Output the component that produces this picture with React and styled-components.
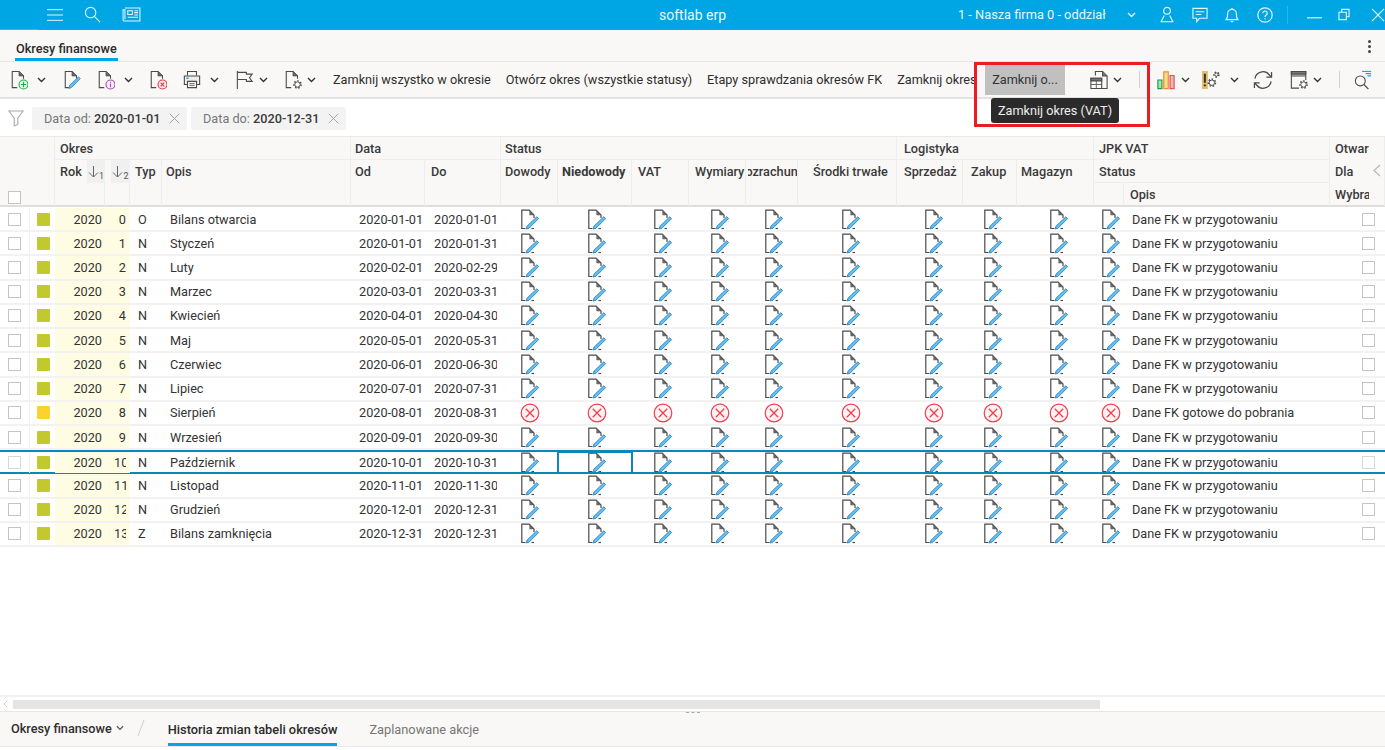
import React from 'react';
import styled, { createGlobalStyle } from 'styled-components';

const Global = createGlobalStyle`
  html, body { margin: 0; padding: 0; background: #fff; overflow: hidden; }
  * { box-sizing: border-box; }
  body { font-family: Roboto, "Noto Sans", sans-serif; font-size: 12.7px; color: #333; }
`;

const COLS = '30px 25px 50px 25px 32px 189px 74px 76px 57px 74px 57px 57px 52px 99px 66px 54px 77px 30px 206px 55px';

const Page = styled.div`position: relative; width: 1385px; height: 750px; display: flex; flex-direction: column; overflow: hidden;`;

const TopBar = styled.header`position: relative; height: 30px; flex: none; background: #00a5e3; color: #e9f8fe; display: flex; align-items: center; border-bottom: 1px solid #1d9fd4;
  &::after { content: ''; position: absolute; left: 0; bottom: -1px; width: 38px; height: 1px; background: #e8784f; }`;
const TopLeft = styled.div`display: flex; align-items: center; gap: 21px; padding-left: 47px; width: 659px;`;
const Brand = styled.div`width: 299px; font-size: 14px;`;
const Firm = styled.div`font-size: 12.8px; width: 169px;`;
const TopRight = styled.div`display: flex; align-items: center;`;
const TopSlot = styled.span`display: flex; margin-left: ${p => p.$ml}px;`;
const TopDivider = styled.span`width: 1px; height: 18px; background: #2fb5e8; margin-left: 14px;`;

const TabBar = styled.div`height: 32px; flex: none; background: #f9f8f6; border-bottom: 1px solid #e6e5e3; display: flex; align-items: flex-end; justify-content: space-between; padding: 0 14px 0 15px;`;
const MainTab = styled.div`height: 29px; padding: 9px 1px 0; font-weight: 500; font-size: 12.7px; color: #2b2b2b; border-bottom: 3px solid #00a5e3;`;
const Kebab = styled.div`align-self: center; display: flex; flex-direction: column; gap: 2px; margin-top: 1px;
  span { width: 3px; height: 3px; background: #444; border-radius: 50%; }`;

const Toolbar = styled.div`height: 37px; flex: none; background: #f9f8f6; border-bottom: 2px solid #e3e3e3; display: flex; align-items: center; padding-left: 10px;`;
const Tool = styled.div`display: flex; align-items: center; flex: none; gap: ${p => p.$gap ?? 9}px; margin-left: ${p => p.$ml ?? 16}px;`;
const ToolText = styled.div`flex: none; white-space: nowrap; overflow: hidden; font-size: 12.7px; color: #2e2e2e; margin-left: ${p => p.$ml ?? 15}px; ${p => p.$w ? `width:${p.$w}px;` : ''}`;
const HotButton = styled.div`flex: none; width: 80px; height: 30px; margin-left: 11px; background: #c0c0c0; color: #333; display: flex; align-items: center; padding-left: 7px; font-size: 12.7px;`;
const ToolSep = styled.span`flex: none; width: 1px; height: 17px; background: #cfcfcf; margin-left: ${p => p.$ml ?? 17}px;`;

const FilterBar = styled.div`height: 37px; flex: none; display: flex; align-items: center; padding: 1px 0 0 8px; background: #fff;`;
const Chip = styled.div`height: 23px; width: 155px; margin-left: ${p => p.$ml}px; background: #f3f3f3; border-radius: 2px; display: flex; align-items: center; padding-left: 12px; color: #777; font-size: 12.7px; white-space: pre;
  b { font-weight: 500; color: #3a3a3a; }
  svg { margin-left: 9px; }`;

const GridHead = styled.div`flex: none; height: 71px; display: grid; grid-template-columns: ${COLS}; grid-template-rows: 23px 23px 23px; background: #f9f8f6; border-top: 1px solid #e8e8e8; border-bottom: 2px solid #dedede; position: relative;`;
const HeadCell = styled.div`grid-column: ${p => p.$c}; grid-row: ${p => p.$r}; min-width: 0; overflow: hidden; white-space: nowrap; display: flex; align-items: ${p => p.$end ? 'flex-end' : p.$tall ? 'flex-start' : 'center'}; justify-content: flex-start; padding-left: ${p => p.$pl ?? 0}px; ${p => p.$end ? 'padding-bottom: 2px;' : ''} ${p => p.$tall ? 'padding-top: 4px;' : ''} font-size: 12.7px; font-weight: ${p => p.$bold ? 700 : 500}; color: #3a3a3a; box-shadow: inset -1px 0 0 #eeedeb${p => p.$under ? ', inset 0 -1px 0 #eeedeb' : ''};`;
const HeadLabel = styled.span`flex: none; ${p => p.$w ? `width:${p.$w}px; overflow:hidden;` : ''}`;
const ClippedLabel = styled.span`flex: none; width: 49px; margin-left: 2px; overflow: hidden; display: flex; justify-content: center;
  span { flex: none; }`;
const SortBox = styled.span`position: absolute; top: 23px; left: ${p => p.$x}px; width: ${p => p.$w}px; height: 23px; background: #f0f0f0; display: flex; align-items: center; justify-content: center; font-size: 9px; font-weight: 400; color: #555;`;
const SortIndex = styled.span`margin-top: 8px;`;
const CollapseArrow = styled.div`position: absolute; left: 1373px; top: 27px;`;

const Body = styled.div`flex: 1; min-height: 0; background: #fff; padding-top: 1px;`;
const Row = styled.div`position: relative; display: grid; grid-template-columns: ${COLS}; height: 24.23px; border-bottom: 2px solid ${p => p.$sel ? '#0b87b9' : '#f3f2f0'}; ${p => p.$sel ? 'border-top: 2px solid #0b87b9;' : ''} align-items: center;`;
const Cell = styled.div`height: 100%; min-width: 0; display: flex; align-items: center; white-space: nowrap; padding-left: ${p => p.$pl ?? 0}px; padding-right: ${p => p.$pr ?? 0}px; font-size: 12.7px; color: #333; background: ${p => p.$tint ? '#fefde3' : 'transparent'}; ${p => p.$line ? 'border-right: 1px solid #f2f1ef;' : ''} ${p => p.$center ? 'justify-content: center;' : ''} ${p => p.$active ? 'outline: 2px solid #0b87b9; outline-offset: -1px;' : ''}`;
const Clip = styled.div`flex: 1; min-width: 0; overflow: hidden; text-align: ${p => p.$right ? 'right' : 'left'};`;
const Check = styled.span`display: block; width: 13px; height: 13px; background: #fff; border: 1px solid ${p => p.$faint ? '#d8d8d8' : '#c4c4c4'};`;
const Square = styled.span`display: block; width: 13px; height: 13px; border-radius: 1px; background: ${p => p.$c};`;

const ScrollArea = styled.div`flex: none; height: 17px; border-top: 2px solid #f1f1f1; border-bottom: 1px solid #e6e6e6; display: flex; align-items: center; padding-left: 3px; gap: 5px; position: relative;`;
const ScrollThumb = styled.div`width: 1087px; height: 9px; background: #e4e4e4;`;
const Grip = styled.div`position: absolute; left: 686px; bottom: -2px; width: 14px; border-top: 1px dashed #aaa; z-index: 2;`;
const BottomBar = styled.div`flex: none; height: 35px; background: #f9f8f6; border-bottom: 1px solid #e8e8e8; display: flex; align-items: stretch; padding-left: 11px;`;
const Crumb = styled.div`display: flex; align-items: center; gap: 4px; font-weight: 500; font-size: 12.7px; color: #2f2f2f; padding-bottom: 2px;`;
const Slash = styled.div`width: 10px; margin: 0 21px 0 13px; display: flex; align-items: center; padding-bottom: 2px;`;
const BottomTab = styled.div`display: flex; align-items: center; margin-right: 32px; font-size: 12.8px; padding-top: 3px; font-weight: ${p => p.$on ? 500 : 400}; color: ${p => p.$on ? '#2b2b2b' : '#777'}; border-bottom: 3px solid ${p => p.$on ? '#00a5e3' : 'transparent'};`;
const Foot = styled.div`flex: none; height: 3px; background: #fff;`;

const RedFrame = styled.div`position: absolute; left: 974px; top: 62px; width: 176px; height: 65px; border: 3px solid #ed1c24; pointer-events: none;`;
const Tip = styled.div`position: absolute; left: 991px; top: 98px; width: 128px; height: 25px; background: #2b2b2b; border-radius: 3px; color: #eee; font-size: 12.7px; display: flex; align-items: center; justify-content: center;`;

const Chevron = ({ c = '#333', w = 9 }) => (
  <svg width={w} height="6" viewBox="0 0 9 6" fill="none"><path d="M1 1l3.500 3.500L8 1" stroke={c} strokeWidth="1.400" /></svg>
);

const Page1 = ({ c = '#4a4a4a' }) => (
  <>
    <path d="M8 19.500H2.500V1.500h7.500l5 5v3" fill="none" stroke={c} strokeWidth="1.200" />
    <path d="M10 1.500v5h5z" fill="#6a6a6a" stroke={c} strokeWidth=".8" />
  </>
);
const Pencil = () => (
  <path d="M17.200 7.500l2 2L9.400 19.400 6.400 20.200l.8-3z" fill="#6dbcec" stroke="#2a8fd0" strokeWidth="1" />
);
const DocEdit = () => (
  <svg width="20" height="21" viewBox="0 0 20 21">
    <path d="M5.500 19.500H1.800V1.200h7.400l4.800 4.800v3" fill="none" stroke="#4a4a4a" strokeWidth="1.200" />
    <path d="M9.400 1.400v4.800h4.600z" fill="#666" />
    <path d="M11.500 19.500h2.500" stroke="#4a4a4a" strokeWidth="1.200" />
    <path d="M16.800 7.800l1.800 1.800L9 19.200 6.200 20l.8-2.800z" fill="#6dbcec" stroke="#2a8fd0" strokeWidth="1" />
  </svg>
);
const DocCancel = () => (
  <svg width="20" height="20" viewBox="0 0 20 20" fill="none">
    <circle cx="10" cy="10" r="8.800" fill="#fff3f3" stroke="#ee3f4f" strokeWidth="1.200" />
    <path d="M5.800 5.800l8.400 8.400M14.200 5.800l-8.400 8.400" stroke="#ee3f4f" strokeWidth="1.300" />
  </svg>
);

const ICO = { width: 18, height: 20, viewBox: '0 0 20 22' };
const NewIcon = () => <svg {...ICO}><Page1 /><circle cx="15" cy="16" r="5" fill="#e3f7e6" stroke="#2aa84a" strokeWidth="1.200" /><path d="M15 13v6M12 16h6" stroke="#2aa84a" strokeWidth="1.200" /></svg>;
const EditIcon = () => <svg {...ICO}><Page1 /><Pencil /></svg>;
const InfoIcon = () => <svg {...ICO}><Page1 /><circle cx="15" cy="16" r="5" fill="#f6ecf8" stroke="#a349b5" strokeWidth="1.200" /><path d="M15 15v4M15 13v1" stroke="#a349b5" strokeWidth="1.200" /></svg>;
const DelIcon = () => <svg {...ICO}><Page1 /><circle cx="15" cy="16" r="5" fill="#fdeaea" stroke="#e5323f" strokeWidth="1.200" /><path d="M13 14l4 4M17 14l-4 4" stroke="#e5323f" strokeWidth="1.200" /></svg>;
const PrintIcon = () => (
  <svg {...ICO} fill="none" stroke="#4a4a4a" strokeWidth="1.200">
    <path d="M5 6V1.500h10V6" /><path d="M5 16H1.500V6.500h17V16H15" fill="#eee" />
    <path d="M5 12.500h10V19.500H5z" fill="#fff" /><path d="M7 15h6M7 17h6" strokeWidth=".9" /><path d="M3.500 9h3" stroke="#2a8fd0" />
  </svg>
);
const FlagIcon = () => (
  <svg {...ICO} fill="none" stroke="#4a4a4a" strokeWidth="1.200">
    <path d="M1.500 1v20" /><path d="M1.500 2.500h10v2H18l-3 4 3 4h-6.500v-2H1.500" />
  </svg>
);
const Gear = ({ x, y, r = 3 }) => (
  <g fill="#fff" stroke="#4a4a4a">
    <circle cx={x} cy={y} r={r + 1} strokeDasharray="1.700 1.900" strokeWidth="1.600" />
    <circle cx={x} cy={y} r={r} strokeWidth="1.100" />
  </g>
);
const DocGearIcon = () => <svg {...ICO}><Page1 /><Gear x={15} y={16} /></svg>;
const DocWinIcon = () => (
  <svg {...ICO} fill="none" stroke="#4a4a4a" strokeWidth="1.200">
    <path d="M6 6V1.500h8l5 5V20.500H13" /><path d="M14 1.500v5h5" fill="#777" />
    <path d="M1 9h12v11.500H1z" fill="#fff" /><path d="M1 9h12v3H1z" fill="#777" /><path d="M1 16h12M7 12v8.500" strokeWidth=".9" />
  </svg>
);
const ChartIcon = () => (
  <svg {...ICO}>
    <path d="M1 11h4.500v9.500H1z" fill="#a9e0b5" stroke="#1f9f45" strokeWidth="1.300" />
    <path d="M7.500 2h5v18.500h-5z" fill="#fbdc8e" stroke="#ee8b2d" strokeWidth="1.300" />
    <path d="M14.500 6h4.500v14.500h-4.500z" fill="#f7b3b9" stroke="#e5505c" strokeWidth="1.300" />
  </svg>
);
const AlertGearIcon = () => (
  <svg {...ICO}>
    <path d="M0 1h6.500v20H0z" fill="#e2bc6a" />
    <path d="M3.200 4v10M3.200 16v2" stroke="#333" strokeWidth="2.200" />
    <Gear x={16} y={5} r={1.800} />
    <Gear x={11} y={14} r={3} />
  </svg>
);
const RefreshIcon = () => (
  <svg width="20" height="20" viewBox="0 0 21 21" fill="none" stroke="#4a4a4a" strokeWidth="1.300">
    <path d="M2 9a8.500 8.500 0 0 1 15-4l2 2.200" /><path d="M19.500 2v5.500H14" />
    <path d="M19 12a8.500 8.500 0 0 1-15 4l-2-2.200" /><path d="M1.500 19v-5.500H7" />
  </svg>
);
const WinGearIcon = () => (
  <svg {...ICO} fill="none" stroke="#4a4a4a" strokeWidth="1.200">
    <path d="M10 20H1.500V1.500h16V11" /><path d="M1.500 1.500h16v3h-16z" fill="#777" /><path d="M1.500 6.500h16" />
    <Gear x={15} y={16} />
  </svg>
);
const SearchListIcon = () => (
  <svg {...ICO} fill="none" stroke="#4a4a4a" strokeWidth="1.200">
    <circle cx="7" cy="12" r="5.500" /><path d="M11 16l5 5" />
    <path d="M9 1.500h10" stroke="#2a9fe0" strokeWidth="1.300" /><path d="M13 4h6M15 6.500h4" stroke="#2a9fe0" strokeWidth="1.300" />
  </svg>
);
const W = '#e4f6fd';
const Burger = () => <svg width="16" height="14" viewBox="0 0 18 14" stroke={W} strokeWidth="1.100"><path d="M0 1h18M0 7h18M0 13h18" /></svg>;
const Mag = () => <svg width="17" height="17" viewBox="0 0 18 18" fill="none" stroke={W} strokeWidth="1.200"><circle cx="7" cy="7" r="5.500" /><path d="M11 11l6 6" /></svg>;
const News = () => <svg width="19" height="15" viewBox="0 0 20 16" fill="none" stroke={W} strokeWidth="1.100"><path d="M3 1h16v14H2.500A1.500 1.500 0 0 1 1 13.500V3h2v10" /><path d="M6 4h5v4H6zM13 4h4M13 6h4M13 8.500h4M6 11h11" /></svg>;
const UserI = () => <svg width="14" height="17" viewBox="0 0 15 18" fill="none" stroke={W} strokeWidth="1.200"><circle cx="7.500" cy="5" r="3.600" /><path d="M4.600 10L1.200 16.800h12.600L10.400 10" /></svg>;
const ChatI = () => <svg width="16" height="16" viewBox="0 0 17 17" fill="none" stroke={W} strokeWidth="1.200"><path d="M1 1.500h15v10.500H8L5 15.500V12H1z" /><path d="M4 5h9M4 8h6" /></svg>;
const BellI = () => <svg width="14" height="16" viewBox="0 0 15 17" fill="none" stroke={W} strokeWidth="1.200"><path d="M1.200 13.500c1.500-1.500 1.600-3 1.600-6.300a4.700 4.700 0 0 1 9.400 0c0 3.300.1 4.800 1.600 6.300z" /><path d="M6 15.700h3M7.500 1v1" /></svg>;
const HelpI = () => <svg width="16" height="16" viewBox="0 0 16 16" fill="none" stroke={W} strokeWidth="1.200"><circle cx="8" cy="8" r="7.200" /><path d="M5.800 6.200a2.200 2.200 0 1 1 3.400 1.900c-.8.500-1.200.9-1.200 1.900M8 11.200v1.300" /></svg>;
const MinI = () => <svg width="15" height="16" viewBox="0 0 16 16" stroke={W} strokeWidth="1.200"><path d="M0 11h16" /></svg>;
const ResI = () => <svg width="12" height="13" viewBox="0 0 13 13" fill="none" stroke={W} strokeWidth="1.200"><path d="M1 4h8v8H1z" /><path d="M4 4V1h8v8H9" /></svg>;
const CloseI = () => <svg width="14" height="14" viewBox="0 0 15 15" stroke={W} strokeWidth="1.200"><path d="M1 1l13 13M14 1L1 14" /></svg>;
const Funnel = () => <svg width="16" height="17" viewBox="0 0 16 17" fill="none" stroke="#a8a8a8" strokeWidth="1.100"><path d="M.8 1h14.400L9.800 8v6.500L6.200 16V8z" /></svg>;
const Cross = () => <svg width="11" height="11" viewBox="0 0 11 11" stroke="#a5a5a5" strokeWidth="1"><path d="M.8.8l9.400 9.400M10.200.8L.8 10.200" /></svg>;
const Sort = ({ n }) => (
  <>
    <svg width="11" height="13" viewBox="0 0 11 13" fill="none" stroke="#666" strokeWidth="1"><path d="M5.500 1v11M1 7.500l4.500 4.500L10 7.500" /></svg>
    <SortIndex>{n}</SortIndex>
  </>
);

const monthRows = [
  ['0', 'O', 'Bilans otwarcia', '2020-01-01', '2020-01-01'],
  ['1', 'N', 'Styczeń', '2020-01-01', '2020-01-31'],
  ['2', 'N', 'Luty', '2020-02-01', '2020-02-29'],
  ['3', 'N', 'Marzec', '2020-03-01', '2020-03-31'],
  ['4', 'N', 'Kwiecień', '2020-04-01', '2020-04-30'],
  ['5', 'N', 'Maj', '2020-05-01', '2020-05-31'],
  ['6', 'N', 'Czerwiec', '2020-06-01', '2020-06-30'],
  ['7', 'N', 'Lipiec', '2020-07-01', '2020-07-31'],
  ['8', 'N', 'Sierpień', '2020-08-01', '2020-08-31'],
  ['9', 'N', 'Wrzesień', '2020-09-01', '2020-09-30'],
  ['10', 'N', 'Październik', '2020-10-01', '2020-10-31'],
  ['11', 'N', 'Listopad', '2020-11-01', '2020-11-30'],
  ['12', 'N', 'Grudzień', '2020-12-01', '2020-12-31'],
  ['13', 'Z', 'Bilans zamknięcia', '2020-12-31', '2020-12-31'],
];
const statusShift = [0, 3, 5, 5, 4, 7, 7, 6, 6, 3];

const heads = [
  { t: 'Okres', c: '3 / 7', r: '1', pl: 5, under: 1 },
  { t: 'Data', c: '7 / 9', r: '1', pl: 4, under: 1 },
  { t: 'Status', c: '9 / 15', r: '1', pl: 4, under: 1 },
  { t: 'Logistyka', c: '15 / 18', r: '1', pl: 7, under: 1 },
  { t: 'JPK VAT', c: '18 / 20', r: '1', pl: 5, under: 1 },
  { t: 'Otwar', c: '20', r: '1', pl: 5, w: 34 },
  { t: 'Rok', c: '3', r: '2 / 4', pl: 5, tall: 1 },
  { t: '', c: '4', r: '2 / 4' },
  { t: 'Typ', c: '5', r: '2 / 4', pl: 5, tall: 1 },
  { t: 'Opis', c: '6', r: '2 / 4', pl: 4, tall: 1 },
  { t: 'Od', c: '7', r: '2 / 4', pl: 4, tall: 1 },
  { t: 'Do', c: '8', r: '2 / 4', pl: 6, tall: 1 },
  { t: 'Dowody', c: '9', r: '2 / 4', pl: 4, tall: 1 },
  { t: 'Niedowody', c: '10', r: '2 / 4', pl: 4, tall: 1, bold: 1 },
  { t: 'VAT', c: '11', r: '2 / 4', pl: 6, tall: 1 },
  { t: 'Wymiary', c: '12', r: '2 / 4', pl: 6, tall: 1, w: 50 },
  { t: 'Rozrachunki', c: '13', r: '2 / 4', clipped: 1, tall: 1 },
  { t: 'Środki trwałe', c: '14', r: '2 / 4', pl: 15, tall: 1 },
  { t: 'Sprzedaż', c: '15', r: '2 / 4', pl: 7, tall: 1 },
  { t: 'Zakup', c: '16', r: '2 / 4', pl: 8, tall: 1 },
  { t: 'Magazyn', c: '17', r: '2 / 4', pl: 4, tall: 1 },
  { t: 'Status', c: '18 / 20', r: '2', pl: 5, under: 1 },
  { t: '', c: '18', r: '3' },
  { t: 'Opis', c: '19', r: '3', pl: 6 },
  { t: 'Dla', c: '20', r: '2', pl: 5, w: 34 },
  { t: 'Wybra', c: '20', r: '3', pl: 5, w: 34 },
];

export default function App() {
  return (
    <Page>
      <Global />
      <TopBar>
        <TopLeft><Burger /><Mag /><News /></TopLeft>
        <Brand>softlab erp</Brand>
        <Firm>1 - Nasza firma 0 - oddział</Firm>
        <TopRight>
          <Chevron c={W} />
          <TopSlot $ml={24}><UserI /></TopSlot>
          <TopSlot $ml={18}><ChatI /></TopSlot>
          <TopSlot $ml={17}><BellI /></TopSlot>
          <TopSlot $ml={18}><HelpI /></TopSlot>
          <TopDivider />
          <TopSlot $ml={19}><MinI /></TopSlot>
          <TopSlot $ml={16}><ResI /></TopSlot>
          <TopSlot $ml={21}><CloseI /></TopSlot>
        </TopRight>
      </TopBar>
      <TabBar>
        <MainTab>Okresy finansowe</MainTab>
        <Kebab><span /><span /><span /></Kebab>
      </TabBar>
      <Toolbar>
        <Tool $ml={0}><NewIcon /><Chevron /></Tool>
        <Tool $ml={17}><EditIcon /></Tool>
        <Tool $ml={16}><InfoIcon /><Chevron /></Tool>
        <Tool $ml={16}><DelIcon /></Tool>
        <Tool $ml={16}><PrintIcon /><Chevron /></Tool>
        <Tool $ml={17} $gap={5}><FlagIcon /><Chevron /></Tool>
        <Tool $ml={16} $gap={5}><DocGearIcon /><Chevron /></Tool>
        <ToolText $ml={17}>Zamknij wszystko w okresie</ToolText>
        <ToolText>Otwórz okres (wszystkie statusy)</ToolText>
        <ToolText>Etapy sprawdzania okresów FK</ToolText>
        <ToolText $w={77}>Zamknij okres (VAT)</ToolText>
        <HotButton>Zamknij o...</HotButton>
        <Tool $ml={25} $gap={5}><DocWinIcon /><Chevron /></Tool>
        <ToolSep />
        <Tool $ml={17} $gap={6}><ChartIcon /><Chevron /></Tool>
        <Tool $ml={12} $gap={10}><AlertGearIcon /><Chevron /></Tool>
        <Tool $ml={14}><RefreshIcon /></Tool>
        <Tool $ml={17} $gap={5}><WinGearIcon /><Chevron /></Tool>
        <ToolSep />
        <Tool $ml={14}><SearchListIcon /></Tool>
      </Toolbar>
      <FilterBar>
        <Funnel />
        <Chip $ml={8}>Data od: <b>2020-01-01</b><Cross /></Chip>
        <Chip $ml={4}>Data do: <b>2020-12-31</b><Cross /></Chip>
      </FilterBar>
      <GridHead>
        <HeadCell $c="1 / 3" $r="1 / 4" $end $pl={8}><Check /></HeadCell>
        {heads.map((h, i) => (
          <HeadCell key={i} $c={h.c} $r={h.r} $pl={h.pl} $tall={h.tall} $bold={h.bold} $under={h.under}>
            {h.clipped ? <ClippedLabel><span>{h.t}</span></ClippedLabel> : <HeadLabel $w={h.w}>{h.t}</HeadLabel>}
          </HeadCell>
        ))}
        <SortBox $x={87} $w={18}><Sort n="1" /></SortBox>
        <SortBox $x={111} $w={19}><Sort n="2" /></SortBox>
        <CollapseArrow><svg width="8" height="13" viewBox="0 0 8 13" fill="none" stroke="#b5b5b5" strokeWidth="1.100"><path d="M7 1L1 6.500 7 12" /></svg></CollapseArrow>
      </GridHead>
      <Body>
        {monthRows.map((r, i) => {
          const sel = i === 10;
          const err = i === 8;
          return (
            <Row key={i} $sel={sel}>
              <Cell $pl={8} $line><Check $faint={sel} /></Cell>
              <Cell $pl={7}><Square $c={err ? '#fdd22f' : '#c2c92e'} /></Cell>
              <Cell $tint $pl={18} $pr={3}><Clip $right>2020</Clip></Cell>
              <Cell $tint $pl={9} $pr={4}><Clip $right>{r[0]}</Clip></Cell>
              <Cell $pl={8}>{r[1]}</Cell>
              <Cell $pl={8}>{r[2]}</Cell>
              <Cell $pl={8}>{r[3]}</Cell>
              <Cell $pl={9} $pr={4}><Clip>{r[4]}</Clip></Cell>
              {statusShift.map((s, k) => (
                <Cell key={k} $center $pl={s} $active={sel && k === 1}>{err ? <DocCancel /> : <DocEdit />}</Cell>
              ))}
              <Cell $pl={8}>{err ? 'Dane FK gotowe do pobrania' : 'Dane FK w przygotowaniu'}</Cell>
              <Cell $pl={32}><Check $faint={sel} /></Cell>
            </Row>
          );
        })}
      </Body>
      <ScrollArea>
        <svg width="5" height="8" viewBox="0 0 5 8" fill="none" stroke="#ccc"><path d="M4.500.5L1 4l3.500 3.500" /></svg>
        <ScrollThumb />
        <Grip />
      </ScrollArea>
      <BottomBar>
        <Crumb>Okresy finansowe <Chevron c="#555" w={8} /></Crumb>
        <Slash><svg width="8" height="18" viewBox="0 0 8 18" stroke="#cfcfcf"><path d="M7 1L1 17" /></svg></Slash>
        <BottomTab $on>Historia zmian tabeli okresów</BottomTab>
        <BottomTab>Zaplanowane akcje</BottomTab>
      </BottomBar>
      <Foot />
      <RedFrame />
      <Tip>Zamknij okres (VAT)</Tip>
    </Page>
  );
}
